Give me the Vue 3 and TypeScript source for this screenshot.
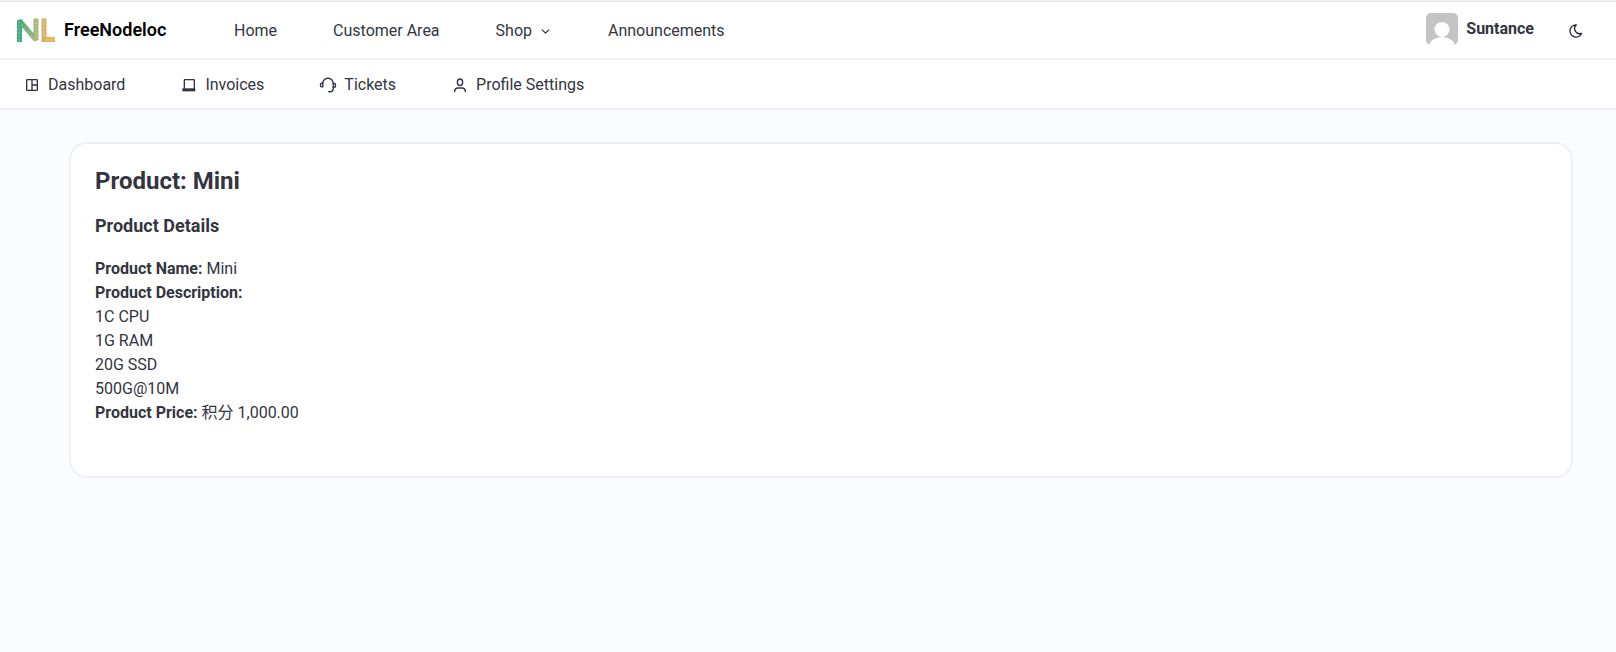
<script setup lang="ts">
const mainLinks: string[] = ['Home', 'Customer Area']
</script>

<template>
  <div class="page">
    <header class="topbar">
      <div class="brand">
        <svg class="logo" width="40" height="26" viewBox="0 0 40 26" fill="none">
          <defs>
            <linearGradient id="nlg" x1="0" x2="40" y1="0" y2="0" gradientUnits="userSpaceOnUse">
              <stop offset="0" stop-color="#2fa878" />
              <stop offset="0.5" stop-color="#a3b87a" />
              <stop offset="0.72" stop-color="#dcb163" />
              <stop offset="1" stop-color="#f2b45e" />
            </linearGradient>
          </defs>
          <path d="M3.500 25V3.500L20 23V1.500" stroke="url(#nlg)" stroke-width="5" stroke-linejoin="bevel" />
          <path d="M28 1.500V22.500H39" stroke="url(#nlg)" stroke-width="5" />
          <path d="M3 24V4M5.500 7.500l13 15M20 21V3M27.500 3v18M30 23h8" stroke="#fff" stroke-opacity=".45" stroke-width=".9" stroke-dasharray="2 1.500" />
        </svg>
        <span class="brand-name">FreeNodeloc</span>
      </div>
      <nav class="main-nav">
        <a v-for="link in mainLinks" :key="link" class="main-link">{{ link }}</a>
        <a class="main-link shop">Shop
          <svg width="13" height="13" viewBox="0 0 24 24" fill="none" stroke="currentColor" stroke-width="2.200" stroke-linecap="round" stroke-linejoin="round"><path d="M6 9l6 6 6-6" /></svg>
        </a>
        <a class="main-link">Announcements</a>
      </nav>
      <div class="user">
        <svg class="avatar" width="32" height="32" viewBox="0 0 32 32">
          <defs>
            <clipPath id="avc"><rect width="32" height="32" rx="5" /></clipPath>
          </defs>
          <g clip-path="url(#avc)">
            <rect width="32" height="32" fill="#c4c4c4" />
            <circle cx="16" cy="16.500" r="7.500" fill="#fff" />
            <ellipse cx="16" cy="33" rx="13" ry="9" fill="#fff" />
          </g>
        </svg>
        <span class="user-name">Suntance</span>
        <svg class="moon" width="16" height="16" viewBox="0 0 24 24" fill="none" stroke="#1f2430" stroke-width="2" stroke-linecap="round" stroke-linejoin="round"><path d="M12 3c.132 0 .263 0 .393 0a7.500 7.500 0 0 0 7.920 12.446a9 9 0 1 1 -8.313 -12.454z" /></svg>
      </div>
    </header>

    <nav class="subbar">
      <a class="sub-link">
        <svg width="16" height="16" viewBox="0 0 24 24" fill="none" stroke="currentColor" stroke-width="2" stroke-linejoin="round"><rect x="4" y="4" width="16" height="16" rx="1" /><path d="M12 4v16M12 12h8" /></svg>
        Dashboard
      </a>
      <a class="sub-link">
        <svg width="16" height="16" viewBox="0 0 24 24" fill="none" stroke="currentColor" stroke-width="2" stroke-linecap="round" stroke-linejoin="round"><path d="M5 17V5a1 1 0 0 1 1-1h13a1 1 0 0 1 1 1v12" /><path d="M3 17.500h18V21H3z" fill="currentColor" stroke-width="1" /></svg>
        Invoices
      </a>
      <a class="sub-link">
        <svg class="headset" width="18" height="18" viewBox="0 0 24 24" fill="none" stroke="currentColor" stroke-width="1.800" stroke-linecap="round" stroke-linejoin="round"><path d="M5 10a7 7 0 0 1 14 0v7a4 4 0 0 1-4 4h-2" /><path d="M5 9.500H3.500A1.500 1.500 0 0 0 2 11v2a1.500 1.500 0 0 0 1.500 1.500H5z" /><path d="M19 10h1.500A1.500 1.500 0 0 1 22 11.500v2a1.500 1.500 0 0 1-1.500 1.500H19" /></svg>
        Tickets
      </a>
      <a class="sub-link">
        <svg width="16" height="16" viewBox="0 0 24 24" fill="none" stroke="currentColor" stroke-width="2" stroke-linecap="round" stroke-linejoin="round"><ellipse cx="12" cy="8" rx="4" ry="5" /><path d="M4 22v-1a5 5 0 0 1 5-4.500h6a5 5 0 0 1 5 4.500v1" /></svg>
        Profile Settings
      </a>
    </nav>

    <main class="content">
      <section class="card">
        <h1 class="title">Product: Mini</h1>
        <h2 class="subtitle">Product Details</h2>
        <div class="details">
          <div><strong>Product Name:</strong> Mini</div>
          <div><strong>Product Description:</strong></div>
          <div>1C CPU</div>
          <div>1G RAM</div>
          <div>20G SSD</div>
          <div>500G@10M</div>
          <div><strong>Product Price:</strong> 积分 1,000.00</div>
        </div>
      </section>
    </main>
  </div>
</template>

<style>
html, body { margin: 0; background: #fbfcff; }
</style>

<style scoped>
.page {
  min-height: 652px;
  background: #fbfcff;
  font-family: Roboto, "Noto Sans CJK SC", sans-serif;
  font-size: 16px;
  line-height: 24px;
  color: #333540;
  box-sizing: border-box;
}
.topbar {
  height: 60px;
  box-sizing: border-box;
  display: flex;
  align-items: center;
  background: #fff;
  border-top: 1px solid #f1f1f3;
  border-bottom: 2px solid #eef0f5;
  box-shadow: inset 0 1px #e2e2e5;
  padding: 1px 32px 0 16px;
}
.brand { display: flex; align-items: center; width: 218px; flex: none; }
.logo { flex: none; margin-right: 8px; }
.brand-name { font-size: 18px; font-weight: 600; color: #000; }
.main-nav { display: flex; align-items: center; gap: 56px; flex: 1; padding-top: 2px; }
.main-link { display: inline-flex; align-items: center; gap: 7px; }
.user { display: flex; align-items: center; }
.avatar { margin: -2px 8px 0 0; }
.user-name { font-weight: 700; position: relative; top: -1px; }
.moon { margin: 1px 0 0 34px; }
.subbar {
  height: 50px;
  box-sizing: border-box;
  display: flex;
  align-items: center;
  gap: 56px;
  background: #fff;
  border-bottom: 2px solid #eef0f5;
  padding: 2px 24px 0;
}
.sub-link { display: inline-flex; align-items: center; gap: 8px; }
.sub-link svg { color: #2f3342; }
.sub-link .headset { margin: 0 -1px; }
.content { padding: 32px 43px 0 69px; }
.card {
  height: 336px;
  box-sizing: border-box;
  background: #fff;
  border: 2px solid #eef0f5;
  border-radius: 18px;
  padding: 22px 23px 22px 24px;
}
.title { margin: 0; font-size: 24px; line-height: 30px; font-weight: 700; }
.subtitle { margin: 16px 0 0; font-size: 18px; line-height: 28px; font-weight: 700; }
.details { margin-top: 17px; }
strong { font-weight: 700; }
</style>
